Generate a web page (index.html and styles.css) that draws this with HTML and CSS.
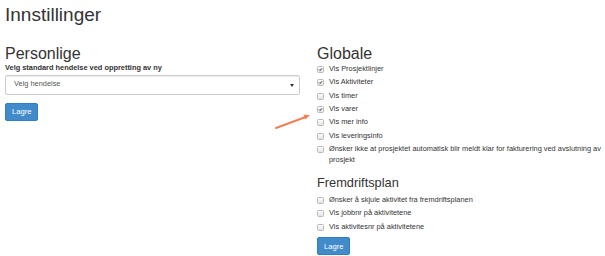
FILE: index.html
```html
<!DOCTYPE html>
<html lang="no">
<head>
    <meta charset="UTF-8">
    <meta name="viewport" content="width=device-width, initial-scale=1.0">
    <title>Innstillinger</title>
    <link rel="stylesheet" href="styles.css">
</head>
<body>
    <div class="page">
        <h1>Innstillinger</h1>

        <div class="row">
            <section class="col">
                <h2>Personlige</h2>
                <label class="field-label" for="hendelse">Velg standard hendelse ved oppretting av ny</label>
                <div class="select" id="hendelse">
                    <span>Velg hendelse</span>
                    <span class="caret"></span>
                </div>
                <button class="btn">Lagre</button>
            </section>

            <section class="col">
                <h2>Globale</h2>
                <ul class="checks checks-global">
                    <li><span class="box checked"><svg viewBox="0 0 7 7"><path d="M1.6 3.6 L2.9 4.9 L5.4 1.9"/></svg></span><span>Vis Prosjektlinjer</span></li>
                    <li><span class="box checked"><svg viewBox="0 0 7 7"><path d="M1.6 3.6 L2.9 4.9 L5.4 1.9"/></svg></span><span>Vis Aktiviteter</span></li>
                    <li><span class="box"></span><span>Vis timer</span></li>
                    <li><span class="box checked"><svg viewBox="0 0 7 7"><path d="M1.6 3.6 L2.9 4.9 L5.4 1.9"/></svg></span><span>Vis varer</span></li>
                    <li><span class="box"></span><span>Vis mer info</span></li>
                    <li><span class="box"></span><span>Vis leveringsinfo</span></li>
                    <li><span class="box"></span><span>Ønsker ikke at prosjektet automatisk blir meldt klar for fakturering ved avslutning av prosjekt</span></li>
                </ul>

                <h3>Fremdriftsplan</h3>
                <ul class="checks">
                    <li><span class="box"></span><span>Ønsker å skjule aktivitet fra fremdriftsplanen</span></li>
                    <li><span class="box"></span><span>Vis jobbnr på aktivitetene</span></li>
                    <li><span class="box"></span><span>Vis aktivitesnr på aktivitetene</span></li>
                </ul>
                <button class="btn btn-plan">Lagre</button>
            </section>
        </div>

        <!-- pointer drawn over the page -->
        <svg class="arrow" width="42" height="24" viewBox="0 0 42 24">
            <line x1="4" y1="19" x2="33" y2="8.3"/>
            <polygon points="38,6 33.3,10.6 31.5,5.8"/>
        </svg>
    </div>
</body>
</html>
```

FILE: styles.css
```css
body {
    margin: 0;
    font-family: 'Liberation Sans', Arial, sans-serif;
    font-size: 7.4px;
    line-height: 10.67px;
    color: #333;
    background: #fff;
}

.page {
    position: relative;
    padding: 0 0 0 5px;
}

h1 {
    font-size: 19px;
    font-weight: 400;
    line-height: 21px;
    margin: 4px 0 5px;
}

h2 {
    font-size: 16px;
    font-weight: 400;
    line-height: 17.6px;
    margin: 15px 0 0;
}

h3 {
    font-size: 12.8px;
    font-weight: 400;
    line-height: 14.1px;
    margin: 11px 0 4.6px;
}

.row {
    display: grid;
    grid-template-columns: 295px 1fr;
    column-gap: 17px;
}

.field-label {
    display: block;
    font-weight: bold;
    margin: 0.5px 0 1px;
}

.select {
    box-sizing: border-box;
    height: 20px;
    display: flex;
    align-items: center;
    justify-content: space-between;
    padding: 0 5px 0 8px;
    border: 1px solid #ccc;
    border-radius: 2px;
    box-shadow: inset 0 1px 1px rgba(0, 0, 0, 0.075);
    color: #555;
    margin-bottom: 8px;
}

.caret {
    width: 0;
    height: 0;
    border-left: 2px solid transparent;
    border-right: 2px solid transparent;
    border-top: 3px solid #333;
    margin-top: 1px;
}

.btn {
    display: block;
    box-sizing: border-box;
    height: 18px;
    padding: 0 6px;
    font-family: inherit;
    font-size: 7.6px;
    color: #fff;
    background-color: #428bca;
    border: 1px solid #357ebd;
    border-radius: 2px;
    cursor: pointer;
}

.btn-plan {
    margin-top: 5px;
}

.checks {
    list-style: none;
    margin: 0;
    padding: 0;
    display: flex;
    flex-direction: column;
    gap: 2.67px;
}

.checks-global {
    margin-top: 1.5px;
}

.checks li {
    display: flex;
    align-items: flex-start;
}

.box {
    flex: none;
    box-sizing: border-box;
    width: 7px;
    height: 7px;
    margin: 1.8px 5px 0 0;
    border: 1px solid #b9b9b9;
    border-radius: 1.5px;
    background: linear-gradient(#fdfdfd, #e4e4e4);
}

.box svg {
    display: block;
    width: 5px;
    height: 5px;
}

.box svg path {
    fill: none;
    stroke: #222;
    stroke-width: 1.3;
}

.arrow {
    position: absolute;
    left: 272px;
    top: 105px;
}

.arrow line {
    stroke: #ef7f55;
    stroke-width: 2;
    stroke-linecap: round;
}

.arrow polygon {
    fill: #ef7f55;
}
```
